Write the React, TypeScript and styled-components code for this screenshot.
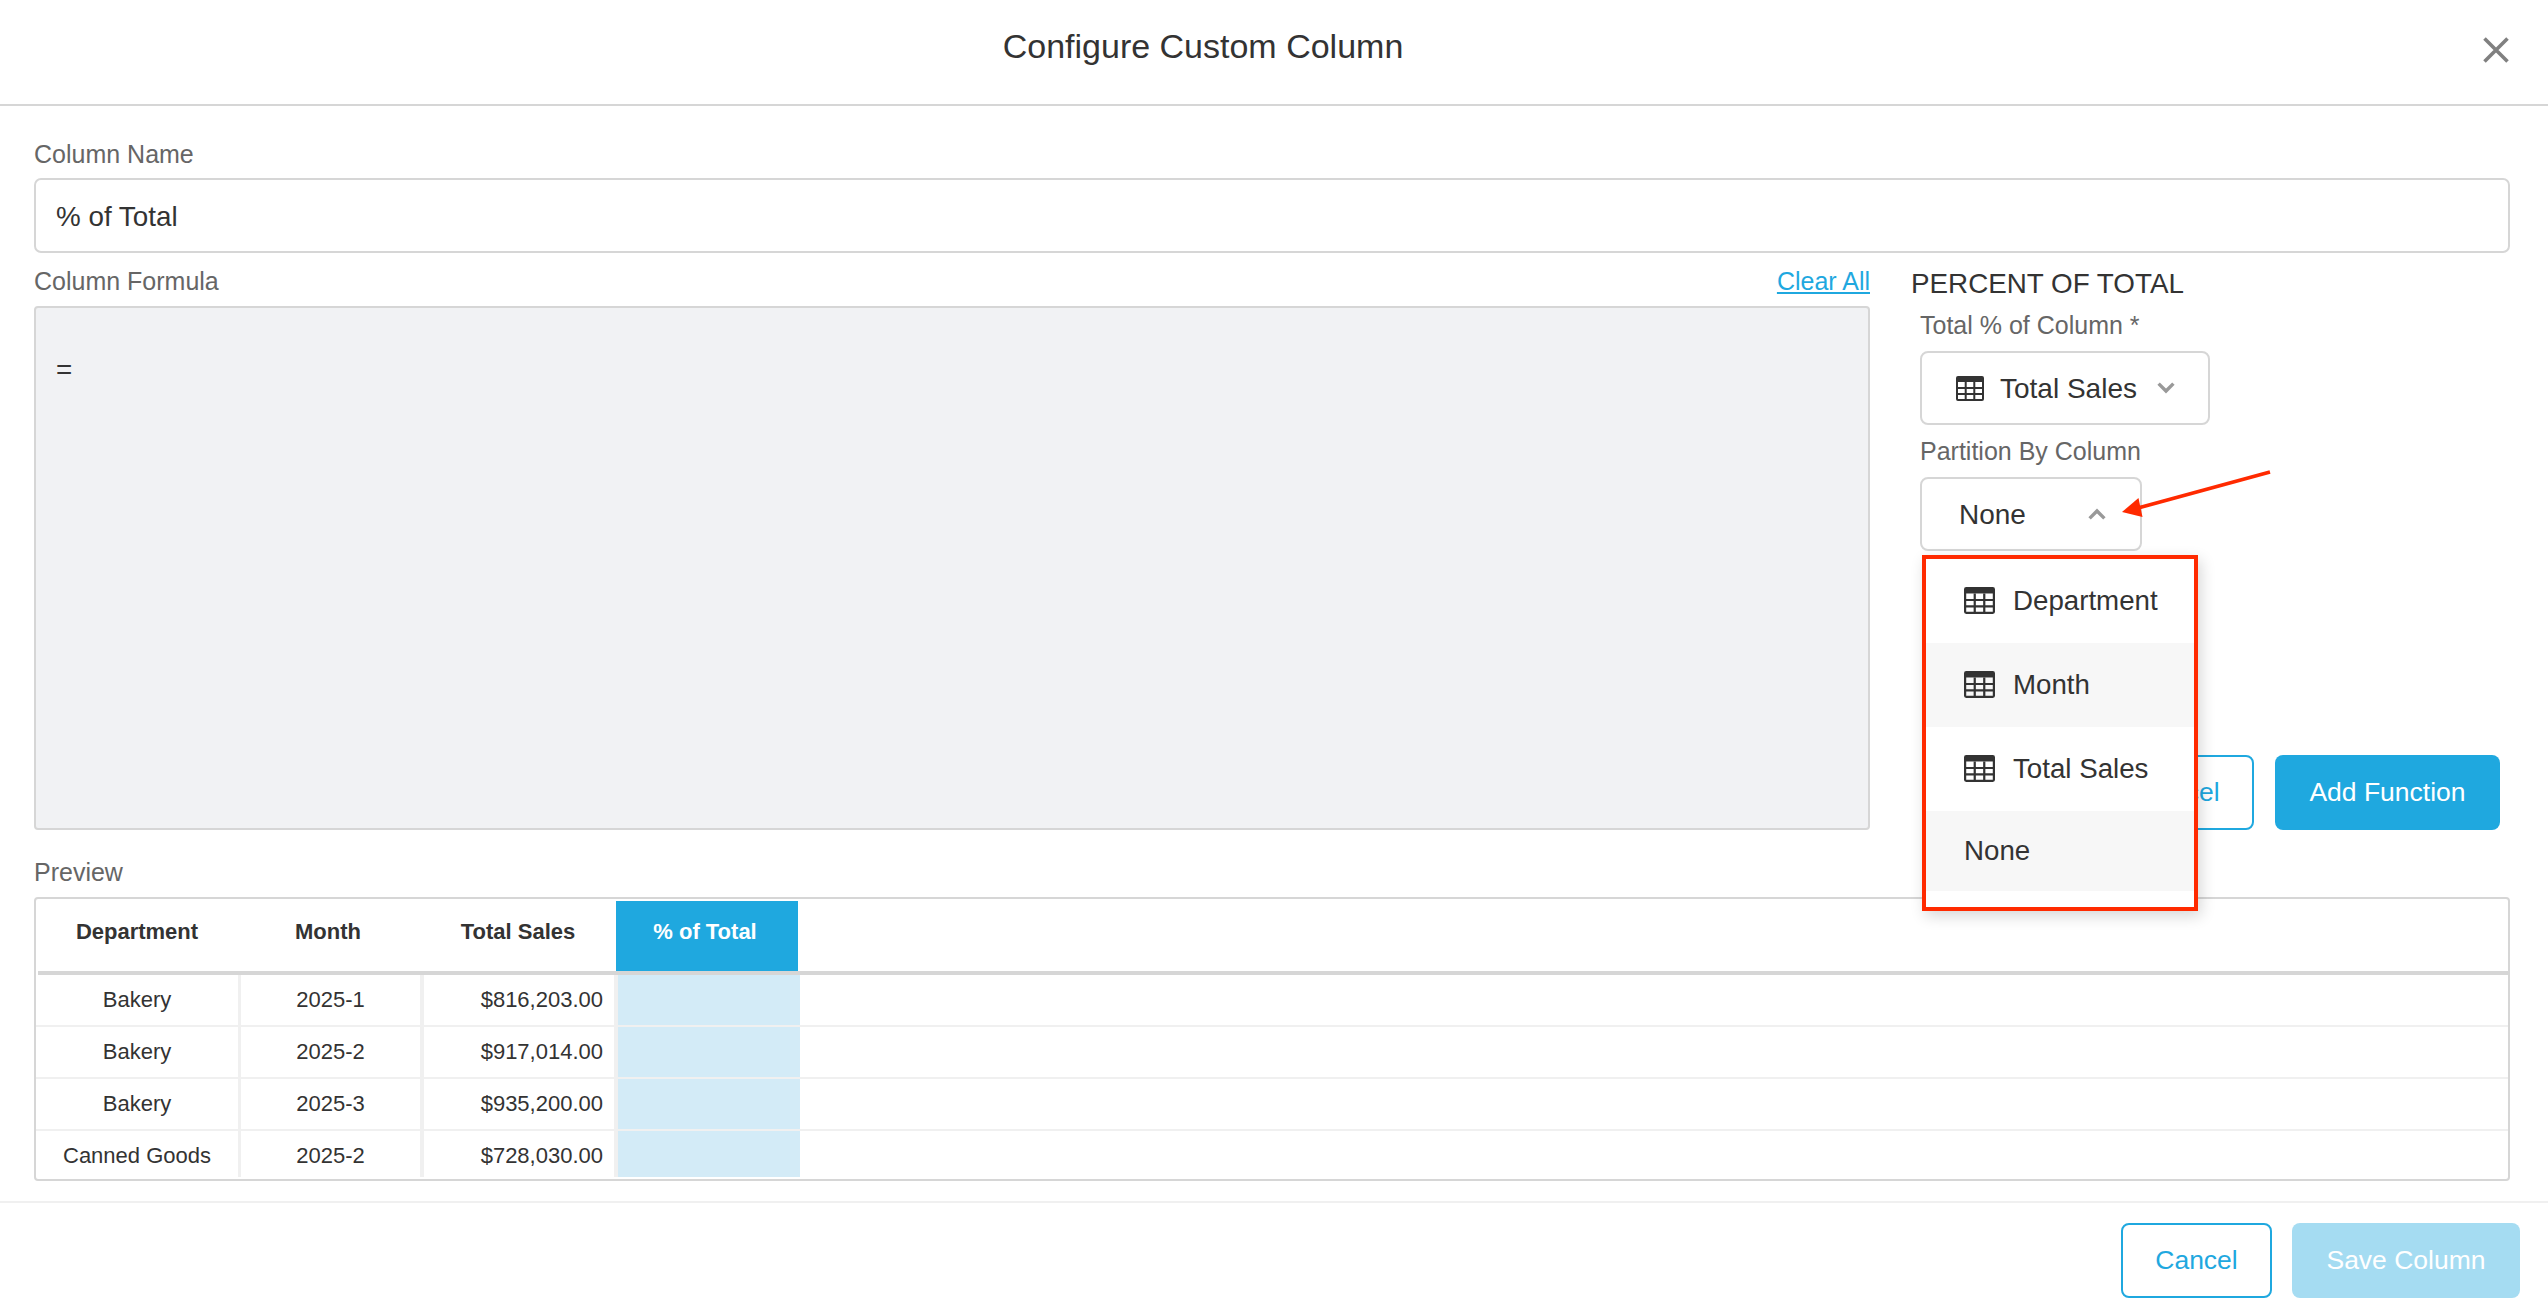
import React from "react";
import styled, { createGlobalStyle } from "styled-components";

const Global = createGlobalStyle`
  html, body { margin: 0; padding: 0; background: #fff; }
  * { box-sizing: border-box; }
  body { font-family: "Liberation Sans", Arial, sans-serif; color: #333; }
`;

const Page = styled.div`
  position: relative;
  width: 2548px;
  height: 1316px;
  overflow: hidden;
  display: flex;
  flex-direction: column;
  background: #fff;
`;

const Header = styled.header`
  height: 106px;
  flex: none;
  display: flex;
  align-items: flex-start;
  border-bottom: 2px solid #d6d6d6;
  padding: 26px 39px 0 0;
`;

const Title = styled.h1`
  flex: 1;
  margin: 0;
  padding-right: 77px;
  text-align: center;
  font-size: 34px;
  line-height: 40px;
  font-weight: 400;
  color: #333;
`;

const CloseButton = styled.button`
  width: 26px;
  height: 26px;
  margin-top: 11px;
  padding: 0;
  border: none;
  background: none;
  display: block;
`;

const Body = styled.main`
  flex: 1;
  padding: 33px 38px 0 34px;
  display: flex;
  flex-direction: column;
`;

const Label = styled.label`
  display: block;
  font-size: 25px;
  line-height: 30px;
  color: #666;
`;

const NameInput = styled.div`
  height: 75px;
  margin-top: 9px;
  padding: 2px 0 0 20px;
  display: flex;
  align-items: center;
  border: 2px solid #d6d6d6;
  border-radius: 7px;
  font-size: 27.8px;
  color: #333;
`;

const EditorRow = styled.section`
  margin-top: 13px;
  display: grid;
  grid-template-columns: 1836px 1fr;
`;

const FormulaColumn = styled.div`
  display: flex;
  flex-direction: column;
`;

const FormulaHead = styled.div`
  display: flex;
  justify-content: space-between;
  align-items: center;
`;

const ClearLink = styled.a`
  font-size: 25px;
  line-height: 30px;
  color: #1fa8df;
  text-decoration: underline;
`;

const FormulaBox = styled.div`
  height: 524px;
  margin-top: 10px;
  padding: 46px 20px 0;
  background: #f1f2f4;
  border: 2px solid #d6d6d6;
  border-radius: 4px;
  font-size: 27.8px;
  line-height: 32px;
  color: #333;
`;

const FunctionPanel = styled.aside`
  padding-left: 41px;
  padding-top: 1px;
  display: flex;
  flex-direction: column;
`;

const PanelTitle = styled.h2`
  margin: 0 0 9px;
  font-size: 27.8px;
  line-height: 34px;
  font-weight: 400;
  color: #333;
`;

const Field = styled.div`
  position: relative;
  padding-left: 9px;
  margin-bottom: 11px;
`;

const SelectBox = styled.div<{ $width: number; $pad: number; $gap: number }>`
  width: ${(p) => p.$width}px;
  height: 74px;
  margin-top: 11px;
  padding-left: ${(p) => p.$pad}px;
  display: flex;
  align-items: center;
  border: 2px solid #d6d6d6;
  border-radius: 8px;
  font-size: 28px;
  color: #333;

  & > .chev {
    margin-left: ${(p) => p.$gap}px;
  }
`;

const SelectText = styled.span<{ $indent: number }>`
  margin-left: ${(p) => p.$indent}px;
  padding-top: 1px;
`;

const Menu = styled.ul`
  position: absolute;
  left: 11px;
  top: 119px;
  width: 276px;
  height: 356px;
  margin: 0;
  padding: 0;
  list-style: none;
  background: #fff;
  border: 4px solid #ff2a00;
  box-shadow: 3px 5px 14px rgba(0, 0, 0, 0.16);
  z-index: 2;
`;

const MenuItem = styled.li<{ $shaded?: boolean; $short?: boolean }>`
  height: ${(p) => (p.$short ? 80 : 84)}px;
  padding-left: 38px;
  padding-bottom: ${(p) => (p.$short ? 0 : 1)}px;
  display: flex;
  align-items: center;
  gap: 18px;
  font-size: 27.7px;
  color: #333;
  background: ${(p) => (p.$shaded ? "#f7f7f7" : "#fff")};
`;

const Actions = styled.div`
  margin-top: 193px;
  padding-right: 10px;
  display: flex;
  justify-content: flex-end;
  gap: 21px;
`;

const Button = styled.button<{ $variant: "outline" | "solid" | "disabled"; $width: number }>`
  width: ${(p) => p.$width}px;
  height: 75px;
  padding: 0;
  border-radius: 8px;
  font-family: inherit;
  font-size: 26.5px;
  border: ${(p) => (p.$variant === "outline" ? "2px solid #1fa8df" : "none")};
  color: ${(p) => (p.$variant === "outline" ? "#1fa8df" : "#fff")};
  background: ${(p) =>
    p.$variant === "outline" ? "#fff" : p.$variant === "solid" ? "#1fa8df" : "#a5dcf2"};
`;

const PreviewLabel = styled(Label)`
  margin-top: 27px;
`;

const TableFrame = styled.div`
  height: 284px;
  margin-top: 10px;
  border: 2px solid #d6d6d6;
  border-radius: 4px;
  overflow: hidden;
`;

const HeadRow = styled.div`
  margin: 2px 0 0 2px;
  height: 74px;
  display: grid;
  grid-template-columns: 198px 184px 196px 182px 1fr;
  border-bottom: 4px solid #d6d6d6;
`;

const HeadCell = styled.div<{ $active?: boolean }>`
  padding-bottom: 8px;
  padding-right: ${(p) => (p.$active ? 4 : 0)}px;
  display: flex;
  align-items: center;
  justify-content: center;
  font-size: 22px;
  font-weight: 700;
  color: ${(p) => (p.$active ? "#fff" : "#333")};
  background: ${(p) => (p.$active ? "#1fa8df" : "transparent")};
`;

const BodyRows = styled.div`
  height: 202px;
  overflow: hidden;
`;

const DataRow = styled.div`
  height: 52px;
  display: grid;
  grid-template-columns: 205px 183px 194px 182px 1fr;
  border-bottom: 2px solid #f0f0f0;
`;

const DataCell = styled.div<{ $align?: "center" | "right"; $divider: number }>`
  display: flex;
  align-items: center;
  justify-content: ${(p) => (p.$align === "right" ? "flex-end" : "center")};
  padding-right: ${(p) => (p.$align === "right" ? 11 : 0)}px;
  font-size: 22px;
  color: #333;
  border-right: ${(p) => p.$divider}px solid #f0f0f0;
`;

const MetricCell = styled.div`
  background: #d3ebf7;
`;

const Footer = styled.footer`
  flex: none;
  height: 115px;
  margin-top: 20px;
  padding: 20px 28px 0 0;
  border-top: 2px solid #f0f0f0;
  display: flex;
  justify-content: flex-end;
  gap: 20px;
`;

const ArrowLayer = styled.svg`
  position: absolute;
  left: 2116px;
  top: 466px;
  z-index: 3;
`;

const TableIcon = ({ w, h }: { w: number; h: number }) => (
  <svg width={w} height={h} viewBox="0 0 28 25" preserveAspectRatio="none" style={{ flex: "none" }}>
    <rect x="1" y="1" width="26" height="23" rx="1" fill="none" stroke="#333" strokeWidth="2" />
    <path d="M1 1h26v5H1z" fill="#333" />
    <path d="M9.7 6v18M18.3 6v18M1 12h26M1 18h26" fill="none" stroke="#333" strokeWidth="2" />
  </svg>
);

const Chevron = ({ up }: { up?: boolean }) => (
  <svg className="chev" width="18" height="12" viewBox="0 0 18 12" style={{ flex: "none" }}>
    <path
      d={up ? "M1.6 10.4L9 3l7.4 7.4" : "M1.6 1.6L9 9l7.4-7.4"}
      fill="none"
      stroke="#999"
      strokeWidth="3.4"
    />
  </svg>
);

const rows = [
  ["Bakery", "2025-1", "$816,203.00"],
  ["Bakery", "2025-2", "$917,014.00"],
  ["Bakery", "2025-3", "$935,200.00"],
  ["Canned Goods", "2025-2", "$728,030.00"],
];

export default function App() {
  return (
    <Page>
      <Global />
      <Header>
        <Title>Configure Custom Column</Title>
        <CloseButton aria-label="Close">
          <svg width="26" height="26" viewBox="0 0 26 26">
            <path d="M1.5 1.5l23 23M24.5 1.5l-23 23" stroke="#808080" strokeWidth="3.6" fill="none" />
          </svg>
        </CloseButton>
      </Header>
      <Body>
        <Label>Column Name</Label>
        <NameInput>% of Total</NameInput>
        <EditorRow>
          <FormulaColumn>
            <FormulaHead>
              <Label>Column Formula</Label>
              <ClearLink>Clear All</ClearLink>
            </FormulaHead>
            <FormulaBox>=</FormulaBox>
          </FormulaColumn>
          <FunctionPanel>
            <PanelTitle>PERCENT OF TOTAL</PanelTitle>
            <Field>
              <Label>Total % of Column *</Label>
              <SelectBox $width={290} $pad={34} $gap={20}>
                <TableIcon w={28} h={25} />
                <SelectText $indent={16}>Total Sales</SelectText>
                <Chevron />
              </SelectBox>
            </Field>
            <Field>
              <Label>Partition By Column</Label>
              <SelectBox $width={222} $pad={37} $gap={62}>
                <SelectText $indent={0}>None</SelectText>
                <Chevron up />
              </SelectBox>
              <Menu>
                <MenuItem>
                  <TableIcon w={31} h={27} />
                  Department
                </MenuItem>
                <MenuItem $shaded>
                  <TableIcon w={31} h={27} />
                  Month
                </MenuItem>
                <MenuItem>
                  <TableIcon w={31} h={27} />
                  Total Sales
                </MenuItem>
                <MenuItem $shaded $short>
                  None
                </MenuItem>
              </Menu>
            </Field>
            <Actions>
              <Button $variant="outline" $width={151}>Cancel</Button>
              <Button $variant="solid" $width={225}>Add Function</Button>
            </Actions>
          </FunctionPanel>
        </EditorRow>
        <PreviewLabel>Preview</PreviewLabel>
        <TableFrame>
          <HeadRow>
            <HeadCell>Department</HeadCell>
            <HeadCell>Month</HeadCell>
            <HeadCell>Total Sales</HeadCell>
            <HeadCell $active>% of Total</HeadCell>
            <div />
          </HeadRow>
          <BodyRows>
            {rows.map((r, i) => (
              <DataRow key={i}>
                <DataCell $divider={3}>{r[0]}</DataCell>
                <DataCell $divider={4}>{r[1]}</DataCell>
                <DataCell $divider={4} $align="right">{r[2]}</DataCell>
                <MetricCell />
                <div />
              </DataRow>
            ))}
          </BodyRows>
        </TableFrame>
      </Body>
      <Footer>
        <Button $variant="outline" $width={151}>Cancel</Button>
        <Button $variant="disabled" $width={228}>Save Column</Button>
      </Footer>
      <ArrowLayer width="160" height="56" viewBox="0 0 160 56">
        <path d="M154 6L22 42" stroke="#ff2a00" strokeWidth="3.8" fill="none" />
        <path d="M6 46L22.5 32 26.5 51z" fill="#ff2a00" />
      </ArrowLayer>
    </Page>
  );
}
